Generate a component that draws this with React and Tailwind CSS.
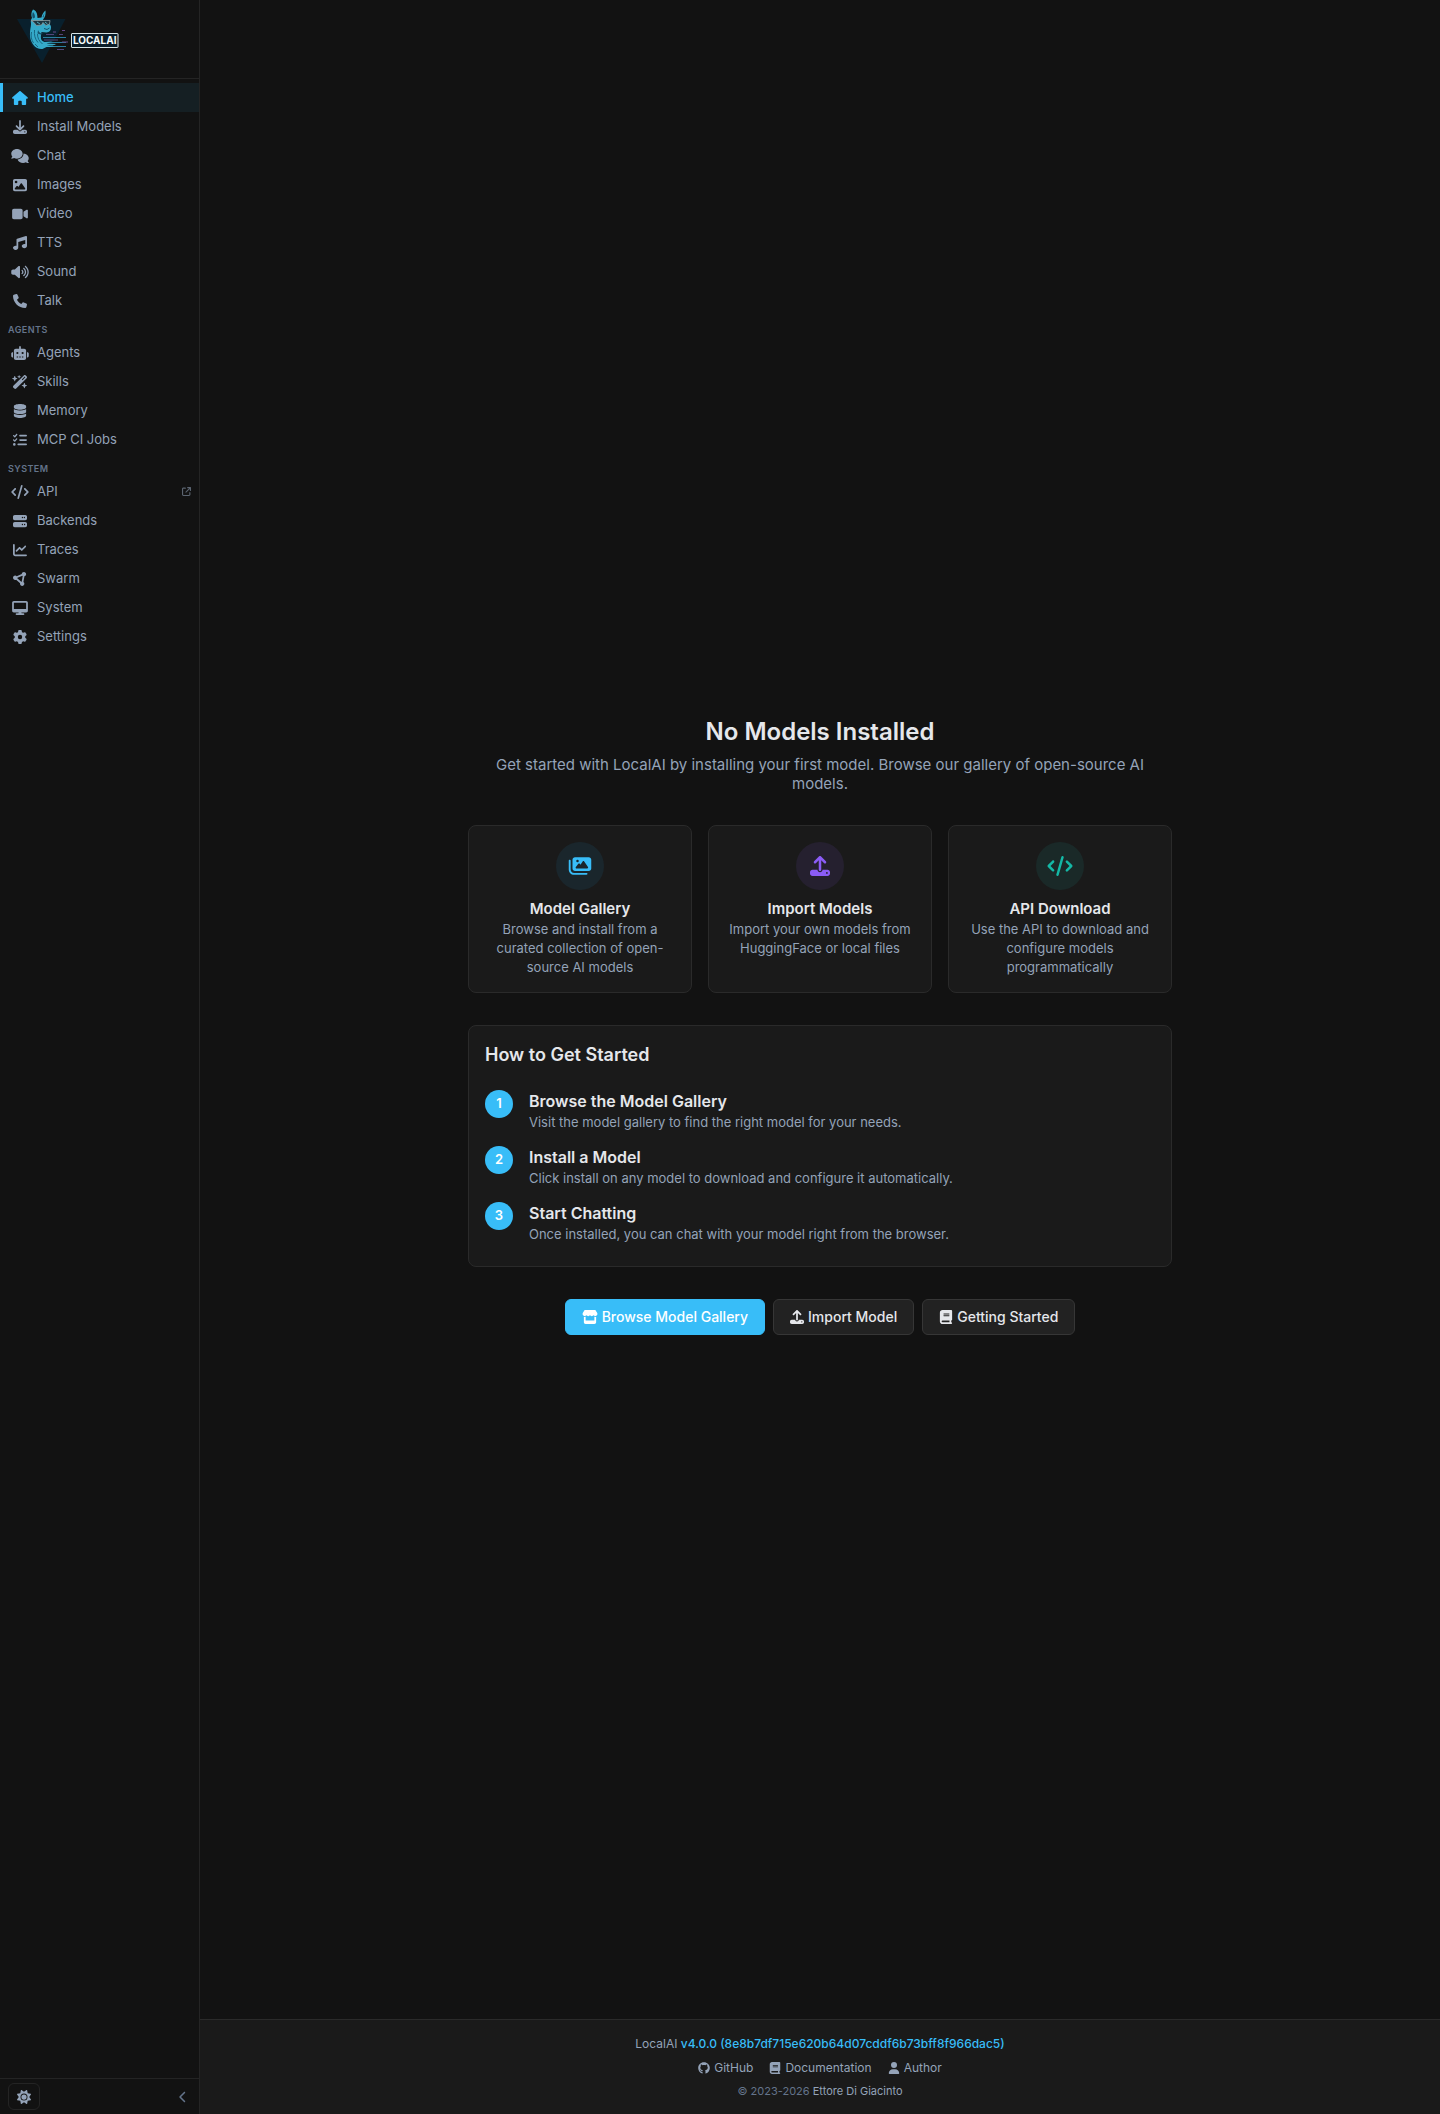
import clsx from 'clsx';
import {
  FaArrowUpRightFromSquare, FaBook, FaChartLine, FaChevronLeft, FaCircleNodes, FaCode, FaComments,
  FaDatabase, FaDesktop, FaDownload, FaGear, FaGithub, FaHouse, FaImage, FaImages, FaListCheck,
  FaMusic, FaPhone, FaRobot, FaServer, FaStore, FaSun, FaUpload, FaUser, FaVideo, FaVolumeHigh,
  FaWandMagicSparkles,
} from 'react-icons/fa6';

const navSections = [
  {
    items: [
      { label: 'Home', icon: FaHouse, active: true },
      { label: 'Install Models', icon: FaDownload },
      { label: 'Chat', icon: FaComments },
      { label: 'Images', icon: FaImage },
      { label: 'Video', icon: FaVideo },
      { label: 'TTS', icon: FaMusic },
      { label: 'Sound', icon: FaVolumeHigh },
      { label: 'Talk', icon: FaPhone },
    ],
  },
  {
    title: 'Agents',
    items: [
      { label: 'Agents', icon: FaRobot },
      { label: 'Skills', icon: FaWandMagicSparkles },
      { label: 'Memory', icon: FaDatabase },
      { label: 'MCP CI Jobs', icon: FaListCheck },
    ],
  },
  {
    title: 'System',
    items: [
      { label: 'API', icon: FaCode, external: true },
      { label: 'Backends', icon: FaServer },
      { label: 'Traces', icon: FaChartLine },
      { label: 'Swarm', icon: FaCircleNodes },
      { label: 'System', icon: FaDesktop },
      { label: 'Settings', icon: FaGear },
    ],
  },
];

const features = [
  { title: 'Model Gallery', text: 'Browse and install from a curated collection of open-source AI models', icon: FaImages, tone: 'bg-[#1a262c] text-[#38bdf8]' },
  { title: 'Import Models', text: 'Import your own models from HuggingFace or local files', icon: FaUpload, tone: 'bg-[#25202f] text-[#8b5cf6]' },
  { title: 'API Download', text: 'Use the API to download and configure models programmatically', icon: FaCode, tone: 'bg-[#1a2928] text-[#14b8a6]' },
];

const steps = [
  { title: 'Browse the Model Gallery', text: 'Visit the model gallery to find the right model for your needs.' },
  { title: 'Install a Model', text: 'Click install on any model to download and configure it automatically.' },
  { title: 'Start Chatting', text: 'Once installed, you can chat with your model right from the browser.' },
];

function Logo() {
  return (
    <svg viewBox="0 0 120 64" className="h-16 w-[120px]" role="img" aria-label="LocalAI">
      <path d="M17 19h48.500L42 63z" fill="#09202d" />
      {/* speed lines */}
      <g strokeWidth="1" fill="none">
        <path d="M43 37.500h23M44 42.500h22M44 46.500h22" stroke="#2b7f9f" />
        <path d="M46 34.500h8M59 34.500h4M44 40h14M46 44.500h9M57 49.500h7" stroke="#54457c" />
        <path d="M62 30.500h3M53 32h3M62 42h6" stroke="#66498a" />
      </g>
      {/* llama */}
      <path d="M33 9.500c-2 2.500-2 6-1 8.500-1 1-1.500 3-1 5 0 2 0 3-.5 5-1 6-1 12 3 17 2 3 6 4.500 9 4l4-2h9l-9-1.500h6l4-1.500-10-.500 6-2-8 .5c-3-1-4-3-3.500-7l.5-3 5 .5c3-.5 4.500-2 4.500-5 0-2-1-3.500-3-4.500l-4-1.500-1-2c2-2 3-5 2.500-9-2 1.500-3.500 4-4 7l-4 .5c0-4-1-7.500-4.500-8.500z" fill="#35aaca" />
      <path d="M33 12c-1 2-1 4.500 0 6.500l2-1c0-2-.5-4-2-5.500zM44.500 13l-2 4 1 .5z" fill="#14516b" />
      <path d="M31.500 32c-1 4 0 8 2 11M34.500 30c-.5 5 .5 9 3.500 12.500M37.500 34c0 4 1.500 7 5 10M35 44l3 3" stroke="#176783" strokeWidth="1" fill="none" />
      <path d="M38 30c1 3 3 3.500 5.500 3.500l-3 1-3-1z" fill="#14516b" />
      <path d="M31 20.500h19l-.5 3.500-3.500 1.500-3-3-1.500 2.500-5 .5-2.500-3z" fill="#1b3440" stroke="#8f9da0" strokeWidth=".8" />
      <path d="M37 22l3 2M45 22l2.500 2" stroke="#55c7dd" strokeWidth=".8" />
      <path d="M44 28.500l3 1 2.500-1.500" stroke="#14516b" strokeWidth="1" fill="none" />
      {/* word mark */}
      <rect x="71.500" y="33.500" width="46.500" height="14" rx=".5" fill="#0b1d29" stroke="#d5e3e6" />
      <text x="94.700" y="44" textAnchor="middle" fontSize="10" className="font-bold" fill="#f4fafa">LOCALAI</text>
    </svg>
  );
}

function NavItem({ item }) {
  const Icon = item.icon;
  return (
    <a
      href="#"
      className={clsx(
        'flex h-[29px] items-center gap-[7px] border-l-[3px] pl-[7px] pr-2 text-[13px]',
        item.active ? 'border-[#38bdf8] bg-[#151f23] font-medium text-[#38bdf8]' : 'border-transparent text-[#94a3b8]',
      )}
    >
      <Icon className="h-[14px] w-5 shrink-0" />
      {item.label}
      {item.external && <FaArrowUpRightFromSquare className="ml-auto text-[9px] text-[#5b6470]" />}
    </a>
  );
}

function Sidebar() {
  return (
    <aside className="flex w-[200px] shrink-0 flex-col border-r border-[#242424]">
      <div className="h-[79px] shrink-0 border-b border-[#242424]">
        <Logo />
      </div>
      <nav className="flex-1 pt-1">
        {navSections.map((section, i) => (
          <div key={i}>
            {section.title && (
              <h2 className="flex h-[23px] items-center px-2 pt-1.5 text-[9px] font-semibold uppercase tracking-wider text-[#64748b]">{section.title}</h2>
            )}
            {section.items.map((item) => <NavItem key={item.label} item={item} />)}
          </div>
        ))}
      </nav>
      <div className="flex h-9 shrink-0 items-center justify-between border-t border-[#242424] pl-2 pr-2.5">
        <button aria-label="Toggle theme" className="flex h-[27px] w-8 items-center justify-center rounded-md border border-[#242424] text-[14px] text-[#94a3b8]">
          <FaSun />
        </button>
        <button aria-label="Collapse sidebar" className="text-[12px] text-[#64748b]">
          <FaChevronLeft />
        </button>
      </div>
    </aside>
  );
}

function FeatureCard({ feature }) {
  const Icon = feature.icon;
  return (
    <div className="rounded-lg border border-[#2a2a2a] bg-[#1a1a1a] px-4 pb-[15px] pt-4 text-center">
      <div className={clsx('mx-auto mb-2 flex size-12 items-center justify-center rounded-full', feature.tone)}>
        <Icon className="h-5 w-[26px]" />
      </div>
      <h3 className="text-[15px] font-semibold leading-[22px] text-[#e5e7eb]">{feature.title}</h3>
      <p className="text-[13px] leading-[19px] text-[#94a3b8]">{feature.text}</p>
    </div>
  );
}

function Footer() {
  return (
    <footer className="flex flex-col items-center border-t border-[#2a2a2a] bg-[#1a1a1a] py-3 text-[12px] leading-6 text-[#94a3b8]">
      <p>
        LocalAI <a href="#" className="font-medium text-[#38bdf8]">v4.0.0 (8e8b7df715e620b64d07cddf6b73bff8f966dac5)</a>
      </p>
      <div className="flex gap-4">
        <a href="#" className="flex items-center gap-1"><FaGithub /> GitHub</a>
        <a href="#" className="flex items-center gap-1"><FaBook /> Documentation</a>
        <a href="#" className="flex items-center gap-1"><FaUser /> Author</a>
      </div>
      <p className="text-[11px] leading-[22px] text-[#64748b]">
        © 2023-2026 <a href="#" className="text-[#94a3b8]">Ettore Di Giacinto</a>
      </p>
    </footer>
  );
}

export default function App() {
  return (
    <div className="flex min-h-screen bg-[#121212] font-['Inter',sans-serif] text-[#e5e7eb]">
      <Sidebar />
      <div className="flex min-w-0 flex-1 flex-col">
        <main className="flex flex-1 flex-col items-center justify-center pt-[30px]">
          <div className="w-full max-w-[704px]">
            <div className="mb-8 text-center">
              <h1 className="mb-1.5 text-[24px] font-semibold leading-[34px]">No Models Installed</h1>
              <p className="text-[15px] leading-[19px] text-[#94a3b8]">
                Get started with LocalAI by installing your first model. Browse our gallery of open-source AI models.
              </p>
            </div>
            <div className="mb-8 grid grid-cols-3 gap-4">
              {features.map((feature) => <FeatureCard key={feature.title} feature={feature} />)}
            </div>
            <section className="mb-8 rounded-lg border border-[#2a2a2a] bg-[#1a1a1a] px-4 pb-[22px] pt-4">
              <h2 className="mb-[22px] text-[18px] font-semibold leading-[26px]">How to Get Started</h2>
              <ol className="flex flex-col gap-[14px]">
                {steps.map((step, i) => (
                  <li key={step.title} className="flex items-start gap-4">
                    <span className="flex size-7 shrink-0 items-center justify-center rounded-full bg-[#38bdf8] text-[13px] font-semibold text-white">{i + 1}</span>
                    <div>
                      <h3 className="text-[16px] font-semibold leading-[22px]">{step.title}</h3>
                      <p className="text-[13px] leading-5 text-[#94a3b8]">{step.text}</p>
                    </div>
                  </li>
                ))}
              </ol>
            </section>
            <div className="flex justify-center gap-2 text-[14px] font-medium">
              <button className="flex h-9 items-center gap-1 rounded-md border border-[#38bdf8] bg-[#38bdf8] px-4 text-white"><FaStore className="h-[14px] w-4" /> Browse Model Gallery</button>
              <button className="flex h-9 items-center gap-1 rounded-md border border-[#363636] bg-[#222222] px-4"><FaUpload /> Import Model</button>
              <button className="flex h-9 items-center gap-1 rounded-md border border-[#363636] bg-[#222222] px-4"><FaBook /> Getting Started</button>
            </div>
          </div>
        </main>
        <Footer />
      </div>
    </div>
  );
}
